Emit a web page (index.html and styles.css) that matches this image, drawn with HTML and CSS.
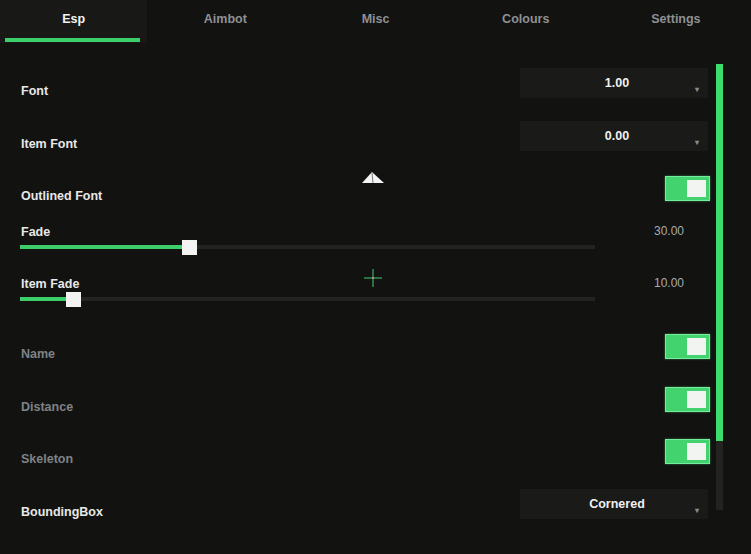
FILE: index.html
```html
<!DOCTYPE html>
<html lang="en">
<head>
    <meta charset="UTF-8">
    <title>Esp</title>
    <link rel="stylesheet" href="styles.css">
</head>
<body>
    <div class="menu">
        <div class="tabs">
            <div class="tab active">Esp<div class="underline"></div></div>
            <div class="tab">Aimbot</div>
            <div class="tab">Misc</div>
            <div class="tab">Colours</div>
            <div class="tab">Settings</div>
        </div>

        <div class="main">
            <div class="content">
                <div class="row">
                    <span class="label">Font</span>
                    <div class="dropdown"><span class="dd-text">1.00</span><span class="dd-arrow">&#9662;</span></div>
                </div>
                <div class="row">
                    <span class="label">Item Font</span>
                    <div class="dropdown"><span class="dd-text">0.00</span><span class="dd-arrow">&#9662;</span></div>
                </div>
                <div class="row row-toggle short">
                    <span class="label">Outlined Font</span>
                    <div class="toggle"><div class="knob"></div></div>
                </div>

                <div class="slider">
                    <div class="slider-head">
                        <span class="label">Fade</span>
                        <span class="value">30.00</span>
                    </div>
                    <div class="track"><div class="fill" style="width: 162px"></div><div class="thumb"></div></div>
                </div>
                <div class="slider tall">
                    <div class="slider-head">
                        <span class="label">Item Fade</span>
                        <span class="value">10.00</span>
                    </div>
                    <div class="track"><div class="fill" style="width: 46px"></div><div class="thumb"></div></div>
                </div>

                <div class="row row-toggle">
                    <span class="label dim">Name</span>
                    <div class="toggle"><div class="knob"></div></div>
                </div>
                <div class="row row-toggle mid">
                    <span class="label dim">Distance</span>
                    <div class="toggle"><div class="knob"></div></div>
                </div>
                <div class="row row-toggle mid">
                    <span class="label dim">Skeleton</span>
                    <div class="toggle"><div class="knob"></div></div>
                </div>
                <div class="row">
                    <span class="label">BoundingBox</span>
                    <div class="dropdown"><span class="dd-text">Cornered</span><span class="dd-arrow">&#9662;</span></div>
                </div>
            </div>

            <div class="scrollbar">
                <div class="scroll-thumb"></div>
            </div>
        </div>

        <!-- mouse cursor + crosshair overlay -->
        <svg class="cursor" width="24" height="13" viewBox="0 0 24 13">
            <polygon points="1,12 11,1 23,12" fill="#f4f4f4"/>
            <line x1="11" y1="2" x2="12" y2="12" stroke="#777" stroke-width="1"/>
        </svg>
        <svg class="crosshair" width="20" height="20" viewBox="0 0 20 20">
            <line x1="1" y1="10" x2="19" y2="10" stroke="#3fae66" stroke-width="1.2"/>
            <line x1="10" y1="1" x2="10" y2="19" stroke="#3fae66" stroke-width="1.2"/>
            <rect x="9" y="9" width="2" height="2" fill="#a88"/>
        </svg>
    </div>
</body>
</html>
```

FILE: styles.css
```css
body {
    margin: 0;
    background-color: #121210;
    font-family: 'Liberation Sans', Arial, sans-serif;
    font-weight: bold;
    font-size: 12.5px;
    color: #e8e8e8;
    overflow: hidden;
}
.menu {
    position: relative;
    width: 751px;
    height: 554px;
}
.tabs {
    display: flex;
    height: 43px;
}
.tab {
    width: 151px;
    text-align: center;
    line-height: 38px;
    color: #8e9094;
}
.tab.active {
    width: 148px;
    margin-right: 3px;
    color: #f2f2f2;
    background-color: #181816;
}
.underline {
    height: 4px;
    margin: 0 7px 0 5px;
    background-color: #3ccf69;
}
.main {
    display: flex;
    margin-top: 21px;
}
.content {
    width: 689px;
    padding: 4px 0 0 21px;
}
.row {
    display: flex;
    justify-content: space-between;
    align-items: flex-start;
    height: 53px;
}
.row.short {
    height: 48px;
}
.row.mid {
    height: 52px;
}
.label {
    padding-top: 16px;
    line-height: 14px;
}
.label.dim {
    color: #7f8287;
}
.row-toggle .label {
    padding-top: 15px;
}
.dropdown {
    display: flex;
    width: 188px;
    height: 30px;
    margin-right: 2px;
    padding: 0 6px 0 22px;
    box-sizing: border-box;
    background-color: #1a1a18;
}
.dd-text {
    flex: 1;
    text-align: center;
    line-height: 30px;
    color: #f0f0f0;
}
.dd-arrow {
    align-self: flex-end;
    width: 10px;
    margin-bottom: 3px;
    font-size: 8px;
    line-height: 10px;
    color: #8a8a8a;
    text-align: center;
}
.toggle {
    display: flex;
    justify-content: flex-end;
    width: 45px;
    height: 25px;
    margin-top: 2px;
    padding: 3px;
    box-sizing: border-box;
    background-color: #42d36e;
    border: 1px solid #72ee9c;
    box-shadow: 0 0 2px rgba(90, 230, 130, 0.5);
}
.knob {
    width: 19px;
    height: 17px;
    background-color: #f2f4f2;
}
.slider {
    height: 52px;
}
.slider.tall {
    height: 58px;
}
.slider-head {
    display: flex;
    justify-content: space-between;
    padding-right: 26px;
}
.slider-head .label {
    padding-top: 3px;
}
.value {
    padding-top: 2px;
    line-height: 14px;
    font-weight: normal;
    font-size: 12px;
    color: #a9abae;
}
.track {
    display: flex;
    align-items: center;
    width: 575px;
    height: 4px;
    margin: 6px 0 0 -1px;
    background-color: #232321;
}
.fill {
    height: 4px;
    background-color: #3ccf69;
}
.thumb {
    flex: none;
    width: 15px;
    height: 15px;
    background-color: #f3f3f3;
}
.scrollbar {
    width: 7px;
    height: 446px;
    margin-left: 6px;
    background-color: #232321;
}
.scroll-thumb {
    height: 377px;
    background-color: #3edb6d;
}
.cursor {
    position: absolute;
    left: 361px;
    top: 171px;
}
.crosshair {
    position: absolute;
    left: 363px;
    top: 268px;
}
```
